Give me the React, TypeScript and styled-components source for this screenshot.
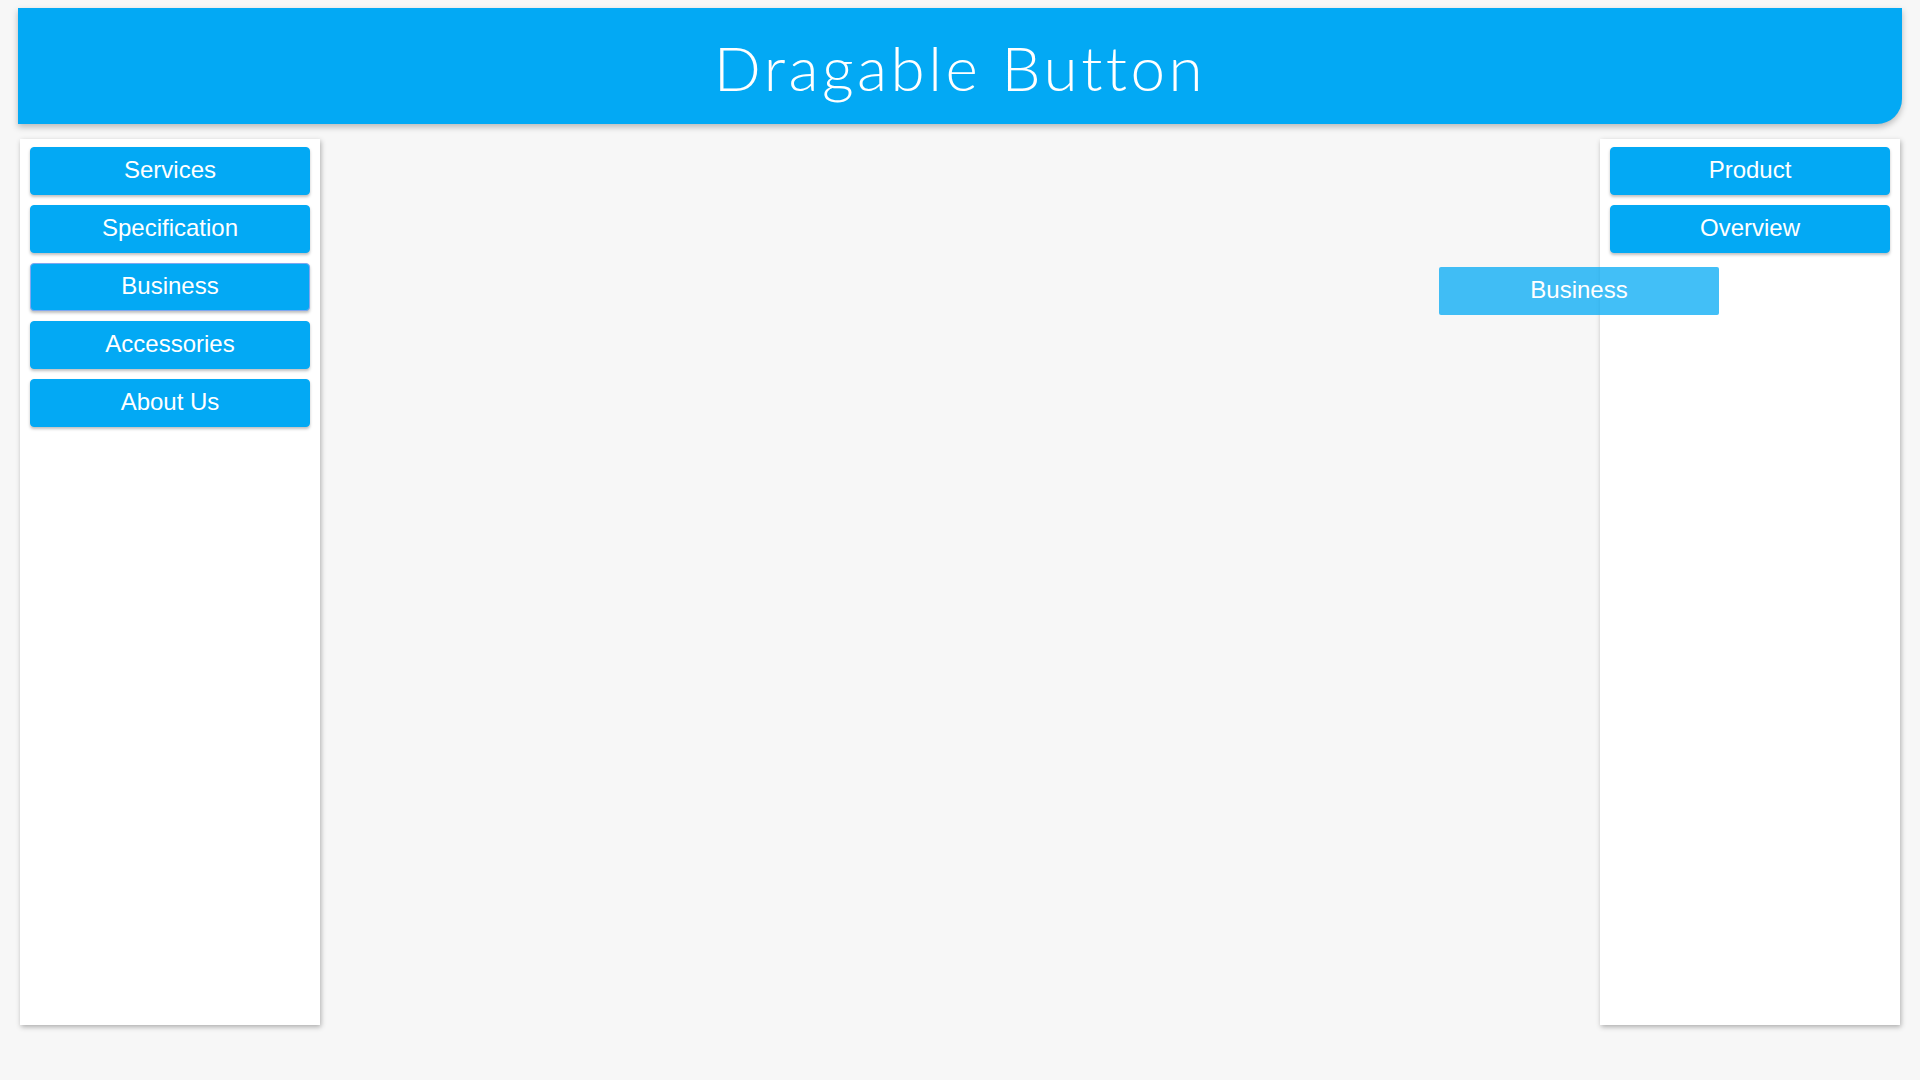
import styled, { createGlobalStyle } from "styled-components";

const GlobalStyle = createGlobalStyle`
	html, body {
		margin: 0;
		padding: 0;
		background: #f7f7f7;
		font-family: "Liberation Sans", Arial, sans-serif;
	}
`;

const Page = styled.div`
	position: relative;
	width: 1920px;
	height: 1080px;
	padding-top: 8px;
	box-sizing: border-box;
`;

const Header = styled.header`
	margin: 0 18px;
	height: 116px;
	background: #03a9f4;
	border-bottom-right-radius: 25px;
	box-shadow: 0 3px 6px rgba(0, 0, 0, 0.25);
	display: flex;
	justify-content: center;
	align-items: center;
`;

const Title = styled.h1`
	margin: 0;
	color: #fff;
	font-family: "Century Gothic", "URW Gothic", Lato, sans-serif;
	font-weight: 300;
	font-size: 62px;
	letter-spacing: 3.5px;
	padding-top: 2px;
`;

const Main = styled.main`
	display: flex;
	justify-content: space-between;
	padding: 0 20px;
	margin-top: 15px;
`;

const Panel = styled.section`
	width: 300px;
	height: 886px;
	box-sizing: border-box;
	background: #fff;
	padding: 8px 10px;
	display: flex;
	flex-direction: column;
	gap: 10px;
	box-shadow: 1px 2px 5px rgba(0, 0, 0, 0.3);
`;

const Button = styled.button<{ $active?: boolean }>`
	width: 280px;
	height: 48px;
	flex: none;
	padding: 0 0 2px;
	border: 1px solid ${(p) => (p.$active ? "#7fa6f0" : "#03a9f4")};
	border-radius: 4px;
	background: #03a9f4;
	color: #fff;
	font-family: "Liberation Sans", Arial, sans-serif;
	font-size: 24px;
	box-shadow: 0 2px 3px rgba(0, 0, 0, 0.25);
	cursor: grab;
`;

const Ghost = styled.div`
	position: absolute;
	left: 1439px;
	top: 267px;
	width: 280px;
	height: 48px;
	padding-bottom: 2px;
	box-sizing: border-box;
	border-radius: 2px;
	background: rgba(3, 169, 244, 0.75);
	color: #fff;
	font-size: 24px;
	display: flex;
	justify-content: center;
	align-items: center;
	pointer-events: none;
`;

const left = ["Services", "Specification", "Business", "Accessories", "About Us"];
const right = ["Product", "Overview"];

export default function App() {
	return (
		<>
			<GlobalStyle />
			<Page>
				<Header>
					<Title>Dragable Button</Title>
				</Header>
				<Main>
					<Panel>
						{left.map((t) => (
							<Button key={t} $active={t === "Business"} draggable>
								{t}
							</Button>
						))}
					</Panel>
					<Panel>
						{right.map((t) => (
							<Button key={t} draggable>
								{t}
							</Button>
						))}
					</Panel>
				</Main>
				<Ghost>Business</Ghost>
			</Page>
		</>
	);
}
